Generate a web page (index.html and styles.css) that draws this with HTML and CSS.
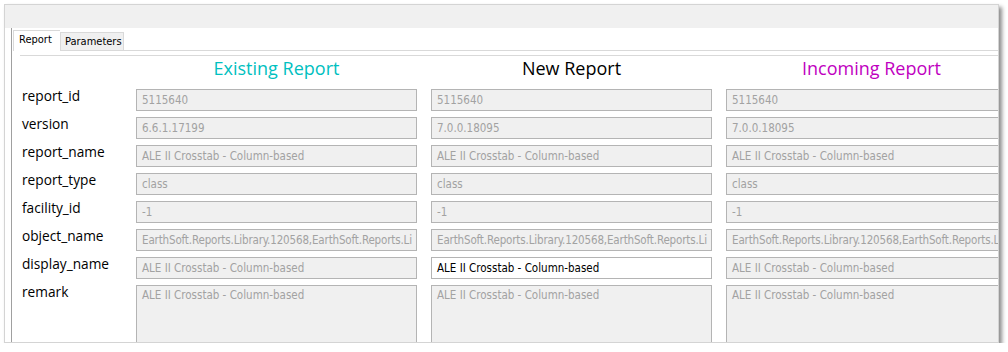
FILE: index.html
```html
<!DOCTYPE html>
<html>
<head>
    <title>Report Compare</title>
    <link rel="stylesheet" href="styles.css">
</head>
<body>
    <div class="window">
        <div class="title-bar"></div>
        <div class="window-body">
            <div class="tab-pane">
                <div class="tab-buttons">
                    <div class="tab-button active">Report</div>
                    <div class="tab-button">Parameters</div>
                </div>

                <div class="compare-grid">
                    <div></div>
                    <div class="col-head existing">Existing Report</div>
                    <div class="col-head new">New Report</div>
                    <div class="col-head incoming">Incoming Report</div>

                    <div class="field-label">report_id</div>
                    <div class="field">5115640</div>
                    <div class="field">5115640</div>
                    <div class="field">5115640</div>

                    <div class="field-label">version</div>
                    <div class="field">6.6.1.17199</div>
                    <div class="field">7.0.0.18095</div>
                    <div class="field">7.0.0.18095</div>

                    <div class="field-label">report_name</div>
                    <div class="field">ALE II Crosstab - Column-based</div>
                    <div class="field">ALE II Crosstab - Column-based</div>
                    <div class="field">ALE II Crosstab - Column-based</div>

                    <div class="field-label">report_type</div>
                    <div class="field">class</div>
                    <div class="field">class</div>
                    <div class="field">class</div>

                    <div class="field-label">facility_id</div>
                    <div class="field">-1</div>
                    <div class="field">-1</div>
                    <div class="field">-1</div>

                    <div class="field-label">object_name</div>
                    <div class="field long">EarthSoft.Reports.Library.120568,EarthSoft.Reports.Li</div>
                    <div class="field long">EarthSoft.Reports.Library.120568,EarthSoft.Reports.Li</div>
                    <div class="field long">EarthSoft.Reports.Library.120568,EarthSoft.Reports.Li</div>

                    <div class="field-label">display_name</div>
                    <div class="field">ALE II Crosstab - Column-based</div>
                    <div class="field editable">ALE II Crosstab - Column-based</div>
                    <div class="field">ALE II Crosstab - Column-based</div>

                    <div class="field-label">remark</div>
                    <div class="field multiline">ALE II Crosstab - Column-based</div>
                    <div class="field multiline">ALE II Crosstab - Column-based</div>
                    <div class="field multiline">ALE II Crosstab - Column-based</div>
                </div>
            </div>
        </div>
    </div>
</body>
</html>
```

FILE: styles.css
```css
:root {
    --window-bg: #ffffff;
    --chrome-bg: #f0f0f0;
    --frame-color: #d4d4d4;
    --tab-border: #d9d9d9;
    --pane-line: #a0a0a0;
    --field-bg: #f0f0f0;
    --field-border: #b4b4b4;
    --field-text: #a2a2a2;
    --label-color: #000000;
    --existing-color: #00c0c0;
    --incoming-color: #c000c0;
}

body {
    margin: 0;
    background-color: #ffffff;
    font-family: "Open Sans", "Noto Sans", sans-serif;
}

.window {
    margin: 4px 0 0 4px;
    width: 995px;
    height: 339px;
    box-sizing: border-box;
    border: 1px solid var(--frame-color);
    background-color: var(--window-bg);
    box-shadow: 3px 3px 4px rgba(0, 0, 0, 0.45);
    overflow: hidden;
    display: flex;
    flex-direction: column;
}

.title-bar {
    height: 23px;
    flex: none;
    background-color: var(--chrome-bg);
}

.window-body {
    flex: 1;
    display: flex;
    padding-left: 6px;
    min-height: 0;
}

.tab-pane {
    flex: 1;
    border-left: 1px solid var(--pane-line);
    padding: 2px 0 0 1px;
    min-width: 0;
}

.tab-buttons {
    display: flex;
    align-items: flex-end;
    height: 20px;
    border-bottom: 1px solid var(--tab-border);
}

.tab-button {
    font-family: "DejaVu Sans Condensed", "DejaVu Sans", sans-serif;
    font-size: 11px;
    color: #000000;
    box-sizing: border-box;
    width: 64px;
    height: 18px;
    line-height: 17px;
    padding-left: 4px;
    background-color: var(--chrome-bg);
    border: 1px solid var(--tab-border);
    border-bottom: none;
}

.tab-button.active {
    height: 21px;
    width: 47px;
    line-height: 18px;
    padding-left: 5px;
    margin-bottom: -1px;
    background-color: #ffffff;
    border-right: none;
}

.compare-grid {
    margin: 4px 0 0 7px;
    border-top: 1px solid var(--tab-border);
    padding-left: 2px;
    display: grid;
    grid-template-columns: 100px 281px 281px 291px;
    grid-template-rows: 27px repeat(7, 22px) 80px;
    column-gap: 14px;
    row-gap: 6px;
}

.col-head {
    font-size: 18px;
    line-height: 25px;
    text-align: center;
    color: #000000;
}

.col-head.existing {
    color: var(--existing-color);
}

.col-head.incoming {
    color: var(--incoming-color);
}

.field-label {
    font-size: 13.7px;
    line-height: 18px;
    margin-top: -2px;
    color: var(--label-color);
    white-space: nowrap;
}

.field {
    box-sizing: border-box;
    height: 22px;
    padding: 0 5px;
    border: 1px solid var(--field-border);
    background-color: var(--field-bg);
    color: var(--field-text);
    font-family: "DejaVu Sans Condensed", "DejaVu Sans", sans-serif;
    font-size: 11.5px;
    line-height: 20px;
    white-space: nowrap;
    overflow: hidden;
}

.field.long {
    padding-right: 2px;
    letter-spacing: -0.15px;
}

.field.editable {
    background-color: #ffffff;
    color: #000000;
}

.field.multiline {
    height: 80px;
    line-height: 16px;
    padding-top: 1px;
}
```
